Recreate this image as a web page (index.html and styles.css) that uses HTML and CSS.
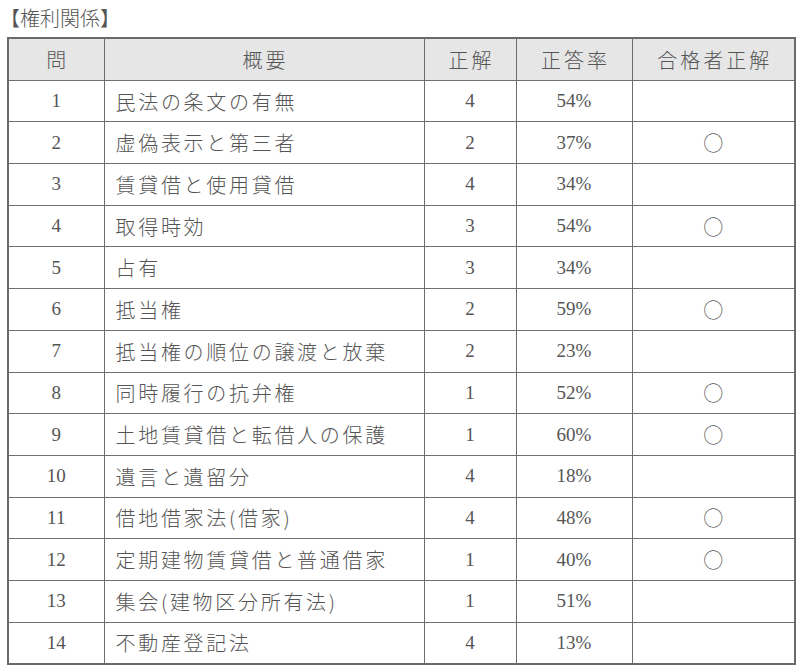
FILE: index.html
```html
<!DOCTYPE html>
<html lang="ja">
<head>
<meta charset="utf-8">
<link rel="stylesheet" href="styles.css">
</head>
<body>
<div class="title">【権利関係】</div>
<table class="tbl">
<colgroup>
<col class="c1"><col class="c2"><col class="c3"><col class="c4"><col class="c5">
</colgroup>
<thead>
<tr><th>問</th><th>概要</th><th>正解</th><th>正答率</th><th>合格者正解</th></tr>
</thead>
<tbody>
<tr><td class="n">1</td><td class="s">民法の条文の有無</td><td class="n">4</td><td class="n">54%</td><td class="m"></td></tr>
<tr><td class="n">2</td><td class="s">虚偽表示と第三者</td><td class="n">2</td><td class="n">37%</td><td class="m">○</td></tr>
<tr><td class="n">3</td><td class="s">賃貸借と使用貸借</td><td class="n">4</td><td class="n">34%</td><td class="m"></td></tr>
<tr><td class="n">4</td><td class="s">取得時効</td><td class="n">3</td><td class="n">54%</td><td class="m">○</td></tr>
<tr><td class="n">5</td><td class="s">占有</td><td class="n">3</td><td class="n">34%</td><td class="m"></td></tr>
<tr><td class="n">6</td><td class="s">抵当権</td><td class="n">2</td><td class="n">59%</td><td class="m">○</td></tr>
<tr><td class="n">7</td><td class="s">抵当権の順位の譲渡と放棄</td><td class="n">2</td><td class="n">23%</td><td class="m"></td></tr>
<tr><td class="n">8</td><td class="s">同時履行の抗弁権</td><td class="n">1</td><td class="n">52%</td><td class="m">○</td></tr>
<tr><td class="n">9</td><td class="s">土地賃貸借と転借人の保護</td><td class="n">1</td><td class="n">60%</td><td class="m">○</td></tr>
<tr><td class="n">10</td><td class="s">遺言と遺留分</td><td class="n">4</td><td class="n">18%</td><td class="m"></td></tr>
<tr><td class="n">11</td><td class="s">借地借家法(借家)</td><td class="n">4</td><td class="n">48%</td><td class="m">○</td></tr>
<tr><td class="n">12</td><td class="s">定期建物賃貸借と普通借家</td><td class="n">1</td><td class="n">40%</td><td class="m">○</td></tr>
<tr><td class="n">13</td><td class="s">集会(建物区分所有法)</td><td class="n">1</td><td class="n">51%</td><td class="m"></td></tr>
<tr><td class="n">14</td><td class="s">不動産登記法</td><td class="n">4</td><td class="n">13%</td><td class="m"></td></tr>
</tbody>
</table>
</body>
</html>
```
FILE: styles.css
```css
html, body {
  margin: 0;
  padding: 0;
  background: #ffffff;
}
body {
  font-family: "Liberation Serif", "Noto Sans CJK JP", serif;
  color: #555;
}
.title {
  font-family: "Noto Sans CJK JP", sans-serif;
  font-size: 20px;
  line-height: 24px;
  padding: 6px 0 0 0;
  height: 37px;
  box-sizing: border-box;
  color: #555;
  font-weight: 300;
}
.tbl {
  margin-left: 7px;
  width: 787px;
  border-collapse: collapse;
  border: 2px solid #6a6a6a;
  table-layout: fixed;
}
.c1 { width: 96px; }
.c2 { width: 320px; }
.c3 { width: 92px; }
.c4 { width: 116px; }
.c5 { width: 163px; }
.tbl th, .tbl td {
  border: 1px solid #6e6e6e;
  height: 40.7px;
  padding: 0;
  font-size: 20px;
  font-weight: 300;
  color: #555;
}
.tbl th {
  background: #e6e6e6;
  font-family: "Noto Sans CJK JP", sans-serif;
  text-align: center;
  letter-spacing: 3px;
  text-indent: 3px;
}
.tbl td.n {
  text-align: center;
  font-family: "Liberation Serif", serif;
  font-weight: normal;
  font-size: 19px;
}
.tbl td.s {
  text-align: left;
  padding-left: 11px;
  font-family: "Noto Sans CJK JP", sans-serif;
  letter-spacing: 2.7px;
}
.tbl td.m {
  text-align: center;
  font-family: "Noto Sans CJK JP", sans-serif;
  font-size: 20px;
}
```
